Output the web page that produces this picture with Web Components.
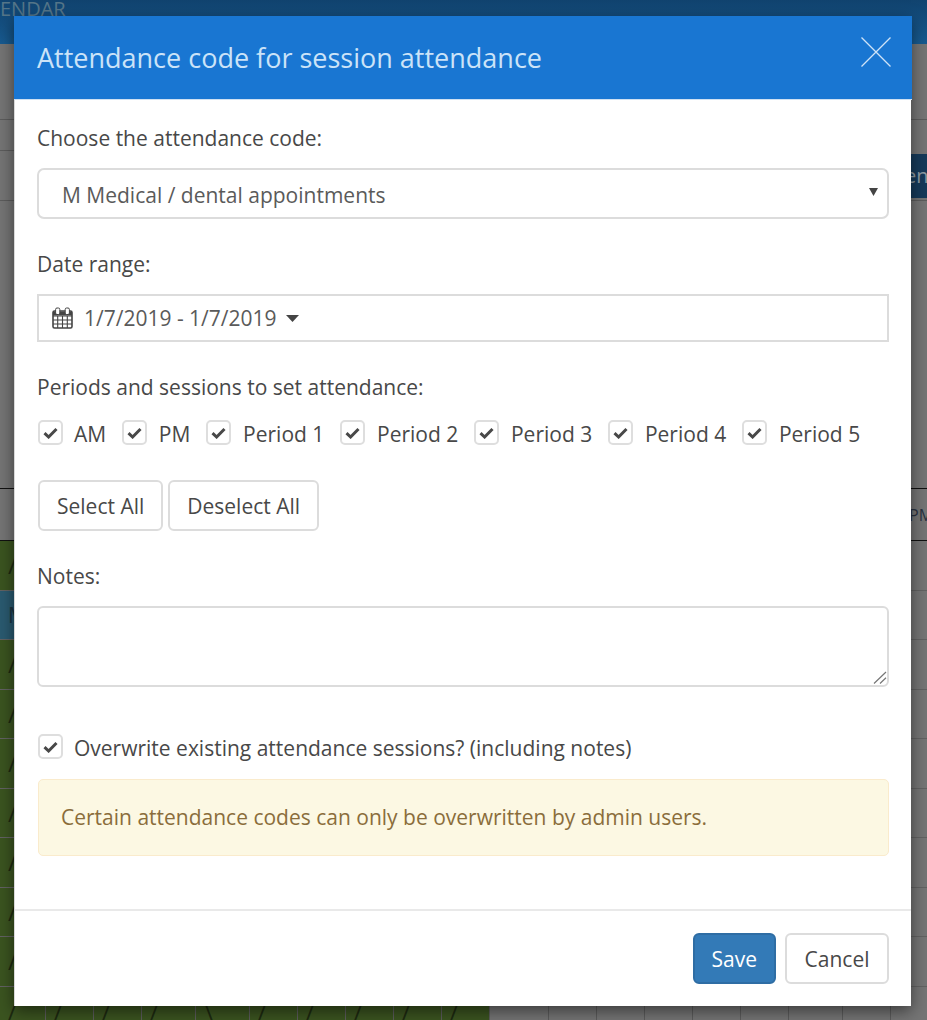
<!DOCTYPE html>
<html><head><meta charset="utf-8"><title>Attendance</title>
<style>
html,body{margin:0;padding:0;height:1020px;overflow:hidden;background:#737373;font-family:"Open Sans","Noto Sans",sans-serif;}
</style></head><body>
<x-backdrop></x-backdrop>
<x-modal heading="Attendance code for session attendance">
  <x-field label="Choose the attendance code:"><x-select value="M Medical / dental appointments"></x-select></x-field>
  <x-field label="Date range:"><x-daterange value="1/7/2019 - 1/7/2019"></x-daterange></x-field>
  <x-field label="Periods and sessions to set attendance:" tight>
    <x-checkrow>
      <x-check>AM</x-check><x-check>PM</x-check><x-check>Period 1</x-check><x-check>Period 2</x-check><x-check>Period 3</x-check><x-check>Period 4</x-check><x-check>Period 5</x-check>
    </x-checkrow>
  </x-field>
  <x-btnrow><x-btn>Select All</x-btn><x-btn>Deselect All</x-btn></x-btnrow>
  <x-field label="Notes:"><x-notes></x-notes></x-field>
  <x-overwrite><x-check>Overwrite existing attendance sessions? (including notes)</x-check></x-overwrite>
  <x-alert>Certain attendance codes can only be overwritten by admin users.</x-alert>
  <x-btn slot="footer" primary>Save</x-btn>
  <x-btn slot="footer" wide>Cancel</x-btn>
</x-modal>
<script>
const el=(name,css,html)=>{customElements.define(name,class extends HTMLElement{
  constructor(){super();this.attachShadow({mode:'open'}).innerHTML='<style>'+css+'</style>'+(typeof html==='function'?html(this):html);}
});};

const widths=[46,48,48,54,54,48,48,48,48,48,59,48,48,48,48,48,54,48];
customElements.define('x-cells',class extends HTMLElement{
  constructor(){super();this.attachShadow({mode:'open'});}
  connectedCallback(){
    const kind=this.getAttribute('kind')||'green';
    const first=this.getAttribute('first')||'/';
    const all=this.hasAttribute('all');
    let cells='';
    widths.forEach((w,i)=>{
      const green=i<10&&kind==='green', teal=i<10&&kind==='teal';
      let t='';
      if(green&&(all||i===0))t=(i===4?'\\':'/');
      if(teal&&i===0)t=first;
      cells+='<div class="c '+(green?'g':teal?'t':'')+'" style="width:'+w+'px">'+(t?'<span>'+t+'</span>':'')+'</div>';
    });
    this.shadowRoot.innerHTML=`<style>
      :host{display:flex;height:49.5px;box-sizing:border-box;border-bottom:1px solid #626262;overflow:hidden}
      .c{flex:none;box-sizing:border-box;border-right:1px solid #5c5c5c;font:24px "Open Sans",sans-serif;color:#1d2a10;padding:9px 0 0 8px;line-height:30px}
      .g{background:#3b5420}
      .t{background:#2a5a70;color:#1a3340;font-size:21px}
    </style>`+cells;
  }
});

el('x-backdrop',`
  :host{display:block;height:1020px;overflow:hidden;background:#757575;color:#2b3340}
  .nav{height:44px;background:linear-gradient(#11436f,#175a90);color:#557689;font-size:20px;line-height:17px;overflow:hidden;white-space:nowrap}
  .r{box-sizing:border-box;border-bottom:1px solid #5c5c5c}
  .r1{height:76px}
  .r2{height:31px;margin-right:16px}
  .r3{height:50px;display:flex;justify-content:flex-end;align-items:center}
  .tab{width:22px;height:44px;background:#163a5a;color:#8d9aa4;font-size:20px;line-height:44px;overflow:hidden;white-space:nowrap}
  .gap{height:288px;box-sizing:border-box;border-bottom:1px solid #111}
  .head{height:52px;box-sizing:border-box;border-bottom:1px solid #111;display:flex;justify-content:flex-end;align-items:center;font-size:16px;color:#2a3140;overflow:hidden}
  .head span{width:18px;white-space:nowrap;overflow:hidden}
`,`<div class="nav">ENDAR</div>
  <div class="r r1"></div><div class="r r2"></div>
  <div class="r r3"><div class="tab">enc</div></div>
  <div class="gap"></div>
  <div class="head"><span>PM</span></div>
  <x-cells></x-cells><x-cells kind="teal" first="M"></x-cells>
  <x-cells></x-cells><x-cells></x-cells><x-cells></x-cells><x-cells></x-cells><x-cells></x-cells><x-cells></x-cells><x-cells></x-cells><x-cells all></x-cells>`);

el('x-modal',`
  :host{position:absolute;left:14px;top:16px;width:897px;box-sizing:border-box;background:#fff;border-left:1px solid #d9d9d9;box-shadow:0 5px 15px rgba(0,0,0,.5);display:block;color:#484848;font-size:21px;height:990px}
  header{height:84px;margin-left:-1px;margin-right:-1px;background:#1976d2;display:flex;align-items:flex-start;justify-content:space-between;padding:0 20px 0 23px;box-sizing:border-box;border-bottom:1px solid #cfe0f2}
  h4{margin:24px 0 0;font-weight:400;font-size:27px;line-height:36px;color:#cbe3f8}
  svg{display:block;margin-top:20px}
  main{padding:24px 22px 0 22px;height:809px;box-sizing:border-box}
  footer{border-top:2px solid #e9e9e9;display:flex;justify-content:flex-end;gap:9px;padding:22px 22px 0 0}
`,h=>`<header><h4>${h.getAttribute('heading')}</h4><svg width="32" height="32" viewBox="0 0 32 32" fill="none" stroke="#cfe3f7" stroke-width="1.3"><path d="M1.5 1.5L30.5 30.5M30.5 1.5L1.5 30.5"/></svg></header>
  <main><slot></slot></main><footer><slot name="footer"></slot></footer>`);

el('x-field',`
  :host{display:block;margin-bottom:31px}
  :host([tight]){margin-bottom:32px}
  label{display:block;line-height:28px;margin-bottom:16px}
  :host([tight]) label{margin-bottom:19px}
`,h=>`<label>${h.getAttribute('label')}</label><slot></slot>`);

el('x-select',`
  :host{display:flex;align-items:center;justify-content:space-between;height:51px;box-sizing:border-box;border:2px solid #dcdcdc;border-radius:7px;padding:2px 9px 0 23px;color:#5a5a5a;background:#fff}
  svg{display:block;margin-top:-6px}
`,h=>`<span>${h.getAttribute('value')}</span><svg width="9" height="8" viewBox="0 0 9 8"><path d="M0 0H9L4.5 8Z" fill="#444"/></svg>`);

el('x-daterange',`
  :host{display:flex;align-items:center;height:48px;box-sizing:border-box;border:2px solid #dcdcdc;padding:0 0 0 13px;color:#5a5a5a;background:#fff}
  span{margin:0 9px 0 11px}
  svg{display:block;flex:none}
`,h=>`<svg width="21" height="22" viewBox="0 0 21 22" fill="none" stroke="#444"><rect x="1" y="4" width="19" height="17" rx="1.5" stroke-width="1.6"/><path d="M1 4.5H20V8.5H1Z" fill="#444" stroke="none"/><path d="M1 9H20M1 13H20M1 17H20M5.7 9V21M10.5 9V21M15.3 9V21" stroke-width="1.1"/><rect x="3.6" y="1" width="4.2" height="6.5" rx="1.4" fill="#fff" stroke="#444" stroke-width="1"/><rect x="13.2" y="1" width="4.2" height="6.5" rx="1.4" fill="#fff" stroke="#444" stroke-width="1"/></svg><span>${h.getAttribute('value')}</span><svg width="13" height="7" viewBox="0 0 13 7"><path d="M0 0H13L6.5 7Z" fill="#444"/></svg>`);

el('x-checkrow',`:host{display:flex;gap:15.7px;align-items:flex-start;height:28px}`,`<slot></slot>`);

el('x-check',`
  :host{display:flex;align-items:flex-start;gap:12px;line-height:28px;white-space:nowrap}
  :host(:first-child){gap:11px}
  .b{width:25px;height:25px;box-sizing:border-box;border:2px solid #dedede;border-radius:5px;display:flex;align-items:center;justify-content:center;background:#fff;flex:none}
  :host(:first-child) .b{margin-left:1px}
  svg{display:block}
`,`<span class="b"><svg width="15" height="12" viewBox="0 0 15 12" fill="none"><path d="M1.5 6.2L5.6 10L13.5 2" stroke="#484848" stroke-width="3"/></svg></span><span><slot></slot></span>`);

el('x-btnrow',`:host{display:flex;gap:5px;margin-bottom:31px;padding-left:1px}`,`<slot></slot>`);

el('x-btn',`
  :host{display:inline-flex;align-items:center;justify-content:center;height:51px;box-sizing:border-box;border:2px solid #dcdcdc;border-radius:6px;padding:0 17px;color:#484848;background:#fff;font-size:21px}
  :host([wide]){padding:0 17.5px}
  :host([primary]){background:#337ab7;border-color:#2e6da4;color:#fff}
`,`<slot></slot>`);

el('x-notes',`
  :host{display:block;height:81px;position:relative}
  textarea{display:block;width:100%;height:81px;box-sizing:border-box;border:2px solid #dcdcdc;border-radius:6px;outline:0;resize:none;background:#fff;margin:0}
  svg{position:absolute;right:2px;bottom:3px;display:block}
`,`<textarea aria-label="Notes"></textarea><svg width="14" height="13" viewBox="0 0 14 13" fill="none" stroke="#777" stroke-width="1.2"><path d="M1 12.5L13 1M7 12.5L13 6.8"/></svg>`);

el('x-overwrite',`:host{display:block;margin-top:47px;height:28px;margin-bottom:17px}`,`<slot></slot>`);

el('x-alert',`
  :host{display:flex;align-items:center;height:77px;box-sizing:border-box;margin-left:1px;border:1px solid #faebcc;border-radius:5px;background:#fcf8e3;color:#8a6d3b;padding:0 22px 2px}
`,`<slot></slot>`);
</script>
</body></html>
